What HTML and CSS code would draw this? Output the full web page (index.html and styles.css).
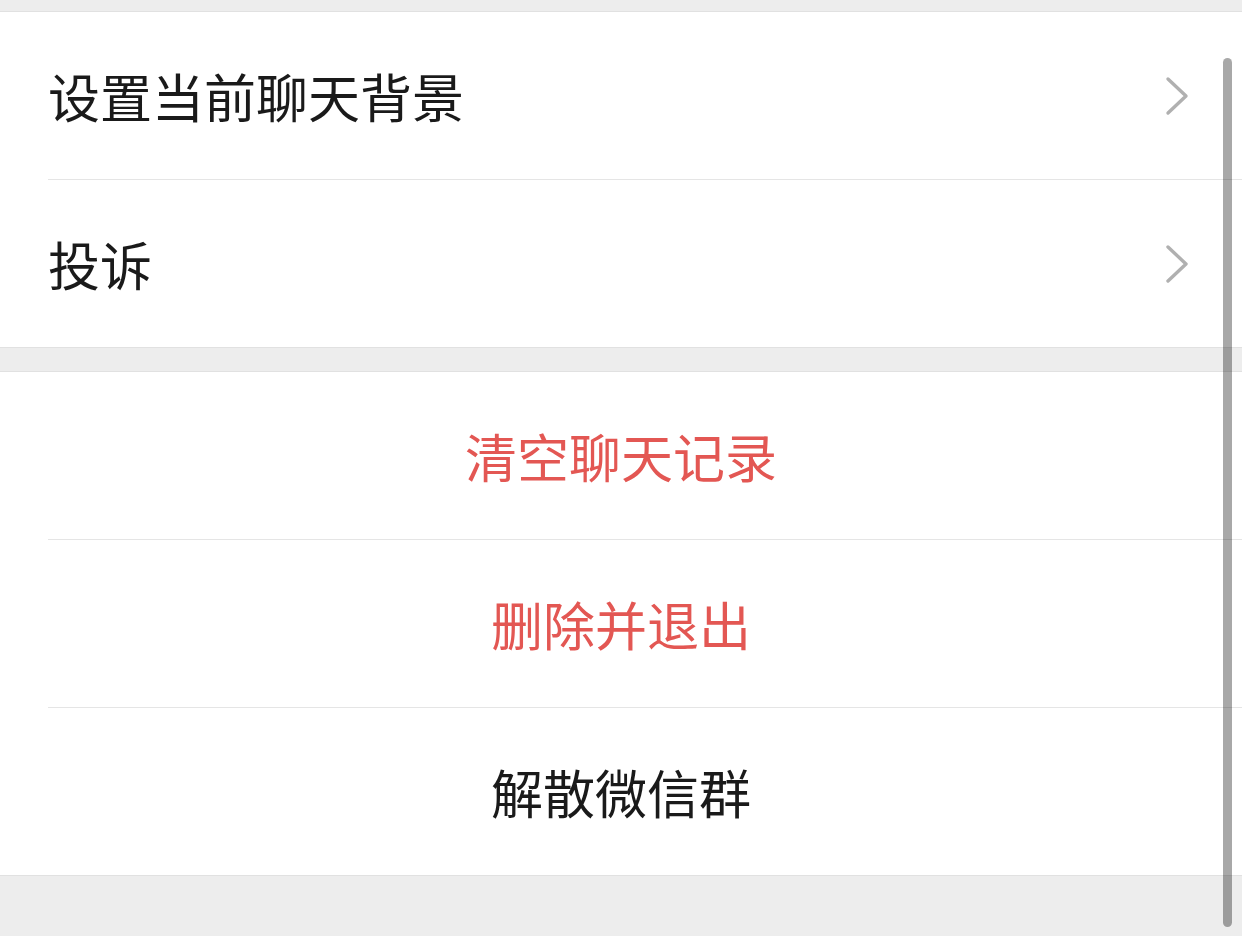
FILE: index.html
```html
<!DOCTYPE html>
<html lang="zh-CN">
<head>
<meta charset="utf-8">
<title>聊天信息</title>
<link rel="stylesheet" href="styles.css">
</head>
<body>
<div class="page">
  <section class="group first">
    <div class="row">
      <div class="row-inner">
        <span class="label">设置当前聊天背景</span>
        <svg class="chev" viewBox="0 0 24 40" width="24" height="40"><polyline points="3,3 21,20 3,37" fill="none" stroke="#b0b0b0" stroke-width="3.4" stroke-linecap="round" stroke-linejoin="round"/></svg>
      </div>
    </div>
    <div class="row">
      <div class="row-inner divided">
        <span class="label">投诉</span>
        <svg class="chev" viewBox="0 0 24 40" width="24" height="40"><polyline points="3,3 21,20 3,37" fill="none" stroke="#b0b0b0" stroke-width="3.4" stroke-linecap="round" stroke-linejoin="round"/></svg>
      </div>
    </div>
  </section>
  <section class="group actions">
    <div class="row">
      <div class="row-inner center">
        <span class="label danger">清空聊天记录</span>
      </div>
    </div>
    <div class="row">
      <div class="row-inner center divided">
        <span class="label danger">删除并退出</span>
      </div>
    </div>
    <div class="row">
      <div class="row-inner center divided">
        <span class="label">解散微信群</span>
      </div>
    </div>
  </section>
  <div class="scrollbar"></div>
</div>
</body>
</html>
```

FILE: styles.css
```css
html, body {
  margin: 0;
  padding: 0;
}
body {
  background: #ededed;
  font-family: "Noto Sans CJK SC", "Noto Sans", sans-serif;
  width: 1242px;
  height: 936px;
  overflow: hidden;
}
.page {
  position: relative;
  padding-top: 11px;
  height: 936px;
  box-sizing: border-box;
}
.group {
  background: #ffffff;
  border-top: 1px solid #e1e1e1;
  border-bottom: 1px solid #e1e1e1;
  margin-bottom: 23px;
}
.row {
  padding-left: 48px;
}
.row-inner {
  height: 167px;
  display: flex;
  align-items: center;
  justify-content: space-between;
  padding-right: 53px;
}
.row-inner.divided {
  border-top: 1px solid #e5e5e5;
}
.row-inner.center {
  justify-content: center;
  padding-right: 48px;
}
.label {
  font-size: 52px;
  line-height: 1;
  color: #1a1a1a;
  letter-spacing: 0;
}
.label.danger {
  color: #e35753;
}
.chev {
  display: block;
  margin-top: 1px;
}
.scrollbar {
  position: absolute;
  left: 1223px;
  top: 58px;
  width: 9px;
  height: 869px;
  border-radius: 5px;
  background: rgba(0, 0, 0, 0.34);
}
```
